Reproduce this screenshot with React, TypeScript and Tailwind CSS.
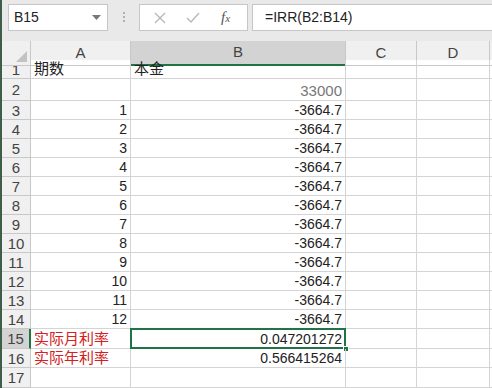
import React from "react";

const font = { fontFamily: '"Liberation Sans", "Noto Sans CJK SC", sans-serif' };

type Row = { n: number; h: string; a?: string; b?: string; aRed?: boolean; bGray?: boolean; aLeft?: boolean };

const rows: Row[] = [
  { n: 1, h: "h-[19px]", a: "期数", b: "本金", aLeft: true },
  { n: 2, h: "h-[22px]", b: "33000", bGray: true },
  ...Array.from({ length: 12 }, (_, i) => ({ n: i + 3, h: "h-[19px]", a: String(i + 1), b: "-3664.7" })),
  { n: 15, h: "h-[20px]", a: "实际月利率", b: "0.047201272", aRed: true, aLeft: true },
  { n: 16, h: "h-[19px]", a: "实际年利率", b: "0.566415264", aRed: true, aLeft: true },
  { n: 17, h: "h-[20px]" },
];

function Toolbar() {
  return (
    <div className="flex h-[41px] items-start bg-[#e9e9e9] pt-[4px]">
      <div className="w-[6px]" />
      <div className="flex h-[27px] w-[100px] items-center justify-between border border-[#c6c6c6] bg-white pl-[5px] pr-[6px]">
        <span className="text-[14px] text-[#222]">B15</span>
        <svg width="9" height="5" viewBox="0 0 9 5">
          <path d="M0 0 L9 0 L4.5 5 Z" fill="#777" />
        </svg>
      </div>
      <div className="flex w-[31px] flex-col items-center gap-[2px] pt-[8px]">
        <span className="h-[2px] w-[2px] bg-[#b0b0b0]" />
        <span className="h-[2px] w-[2px] bg-[#b0b0b0]" />
        <span className="h-[2px] w-[2px] bg-[#b0b0b0]" />
      </div>
      <div className="flex h-[27px] w-[109px] items-center border border-[#c6c6c6] bg-white">
        <svg className="ml-[14px]" width="12" height="12" viewBox="0 0 12 12">
          <path d="M1 1 L11 11 M11 1 L1 11" stroke="#b8b8b8" strokeWidth="1.4" />
        </svg>
        <svg className="ml-[20px]" width="14" height="12" viewBox="0 0 14 12">
          <path d="M1 6 L5 10 L13 1" stroke="#b8b8b8" strokeWidth="1.4" fill="none" />
        </svg>
        <span className="ml-[21px] text-[15px] italic text-[#555]" style={{ fontFamily: '"Liberation Serif", serif' }}>
          f<span className="text-[11px]">x</span>
        </span>
      </div>
      <div className="w-[4px]" />
      <div className="flex h-[27px] flex-1 items-center border border-r-0 border-[#c6c6c6] bg-white pl-[12px]">
        <span className="text-[14px] text-[#222]">=IRR(B2:B14)</span>
      </div>
    </div>
  );
}

function Header() {
  return (
    <div className="grid h-[19px] grid-cols-[29px_100px_215px_71px_73px_1fr] bg-[#f0f0f0] text-[15px] text-[#444]">
      <div className="relative border-r border-b border-[#c8c8c8]">
        <svg className="absolute right-[3px] bottom-[3px]" width="11" height="11" viewBox="0 0 11 11">
          <path d="M11 0 L11 11 L0 11 Z" fill="#c2c2c2" />
        </svg>
      </div>
      <div className="flex items-center justify-center border-r border-b border-[#c8c8c8]">A</div>
      <div className="flex items-center justify-center border-r border-b-2 border-r-[#c8c8c8] border-b-[#217346] bg-[#d3d3d3]">B</div>
      <div className="flex items-center justify-center border-r border-b border-[#c8c8c8]">C</div>
      <div className="flex items-center justify-center border-r border-b border-[#c8c8c8]">D</div>
      <div className="border-b border-[#c8c8c8]" />
    </div>
  );
}

function GridRow({ r }: { r: Row }) {
  const sel = r.n === 15;
  return (
    <div className={`grid grid-cols-[29px_100px_215px_71px_73px_1fr] ${r.h} text-[14px] leading-none`}>
      <div
        className={`flex items-center justify-center border-b border-r text-[15px] text-[#444] ${
          sel ? "border-r-2 border-r-[#217346] border-b-[#c8c8c8] bg-[#d3d3d3]" : "border-[#c8c8c8] bg-[#f0f0f0]"
        }`}
      >
        {r.n}
      </div>
      <div
        className={`flex items-end pb-[2px] border-r border-b border-[#d4d4d4] ${
          r.aLeft ? "justify-start pl-[3px] text-[15px]" : "justify-end pr-[3px]"
        } ${r.aRed ? "text-[#d42020]" : "text-[#222]"}`}
      >
        {r.a}
      </div>
      <div
        className={`relative flex items-end pb-[2px] border-r border-b border-[#d4d4d4] ${
          r.n === 1 ? "justify-start pl-[3px] text-[15px]" : "justify-end pr-[3px]"
        } ${r.bGray ? "text-[15px] text-[#777]" : "text-[#222]"}`}
      >
        {r.b}
        {sel && (
          <>
            <div className="absolute -left-[1px] -top-[1px] -right-[1px] -bottom-[1px] border-2 border-[#217346]" />
            <div className="absolute -right-[4px] -bottom-[4px] h-[6px] w-[6px] border border-white bg-[#217346]" />
          </>
        )}
      </div>
      <div className="border-r border-b border-[#d4d4d4]" />
      <div className="border-r border-b border-[#d4d4d4]" />
      <div className="border-b border-[#d4d4d4]" />
    </div>
  );
}

export default function App() {
  return (
    <div className="flex h-[388px] w-[492px] overflow-hidden bg-white" style={font}>
      <div className="w-[2px] bg-[#3f5e4a]" />
      <div className="flex flex-1 flex-col">
        <Toolbar />
        <Header />
        {rows.map((r) => (
          <GridRow key={r.n} r={r} />
        ))}
      </div>
    </div>
  );
}
